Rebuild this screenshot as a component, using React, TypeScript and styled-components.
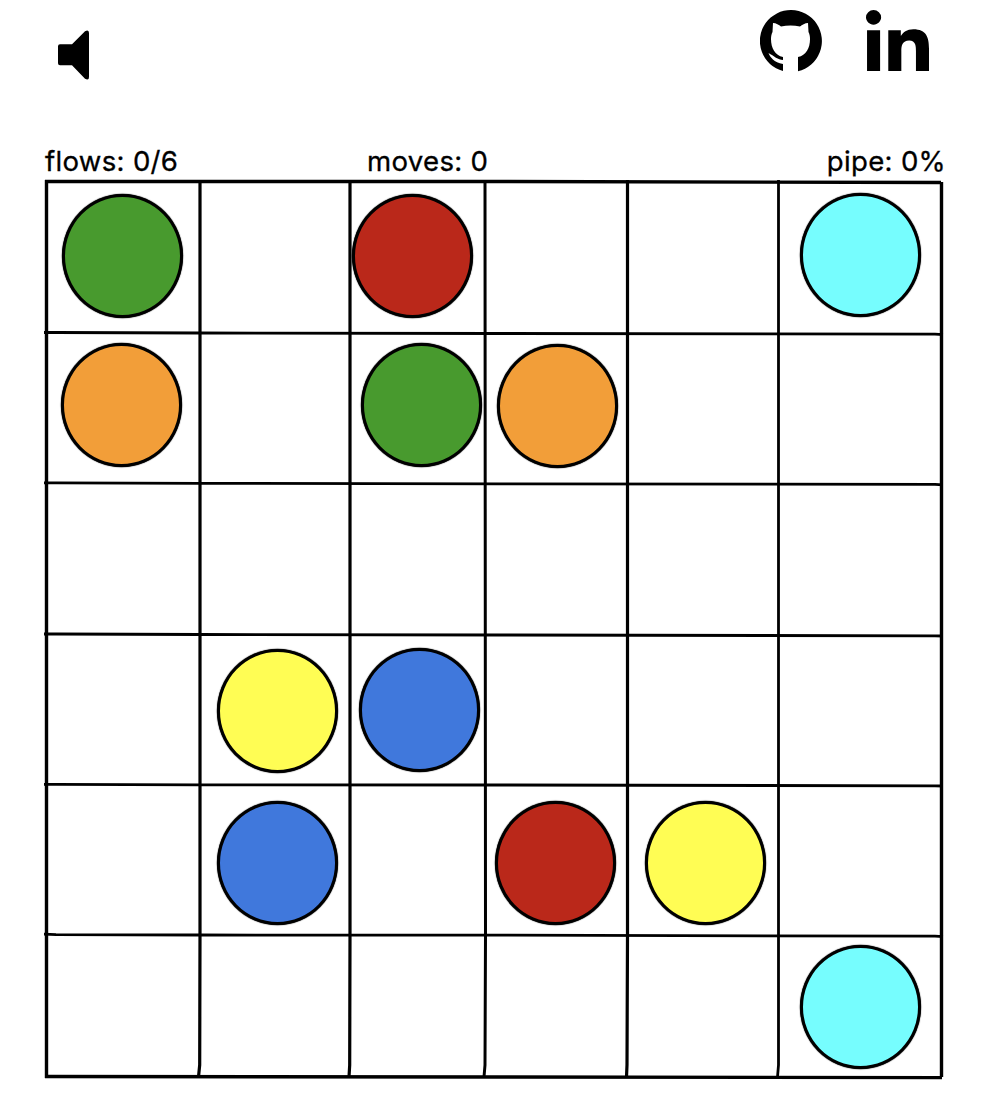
import React from "react";
import styled, { createGlobalStyle } from "styled-components";

const GlobalStyle = createGlobalStyle`
  html, body {
    margin: 0;
    padding: 0;
    background: #fff;
    color: #000;
    font-family: "Inter", "Lato", sans-serif;
  }
`;

const Page = styled.div`
  width: 1004px;
  height: 1114px;
  overflow: hidden;
`;

const TopBar = styled.header`
  display: flex;
  justify-content: space-between;
  align-items: flex-start;
  height: 135px;
  padding: 10px 75px 0 58px;
`;

const SoundButton = styled.button`
  display: block;
  margin: 20px 0 0;
  padding: 0;
  border: none;
  background: none;
  line-height: 0;
`;

const Socials = styled.nav`
  display: flex;
  align-items: flex-start;
  gap: 44px;
`;

const SocialLink = styled.a`
  display: block;
  color: #000;
  line-height: 0;
`;

const Stats = styled.div`
  display: grid;
  grid-template-columns: 322px 1fr auto;
  align-items: end;
  box-sizing: border-box;
  width: 901px;
  height: 36px;
  margin-left: 45px;
  padding-bottom: 5px;
`;

const Stat = styled.span`
  font-size: 27.6px;
  font-weight: 400;
  line-height: 32px;
  letter-spacing: 0.3px;
  -webkit-text-stroke: 0.3px #000;
  white-space: nowrap;
`;

const Board = styled.main`
  position: relative;
  display: grid;
  grid-template-columns: 154px 150px 135px 143px 151px 163px;
  grid-template-rows: 152px 150px 151px 150px 150px 142px;
  width: 896px;
  margin-left: 46px;
`;

const BoardLines = styled.svg`
  position: absolute;
  left: -4px;
  top: -4px;
  pointer-events: none;
`;

const Cell = styled.div`
  position: relative;
  min-width: 0;
`;

const Dot = styled.div<{ $color: string; $x: number; $y: number }>`
  box-sizing: border-box;
  width: 121px;
  height: 124px;
  margin: ${(p) => p.$y}px 0 0 ${(p) => p.$x}px;
  border: 3px solid #000;
  border-radius: 50%;
  background: ${(p) => p.$color};
  box-shadow: 0 0 1px 0.2px #000;
`;

const GREEN = "#489a2e";
const RED = "#ba281a";
const CYAN = "#76fdfe";
const ORANGE = "#f29e39";
const YELLOW = "#fffd54";
const BLUE = "#4078dc";

// hand placed, the dots are not centered in their cells
const dots = [
  { row: 0, col: 0, color: GREEN, x: 16, y: 13 },
  { row: 0, col: 2, color: RED, x: 2, y: 13 },
  { row: 0, col: 5, color: CYAN, x: 21, y: 12 },
  { row: 1, col: 0, color: ORANGE, x: 15, y: 10 },
  { row: 1, col: 2, color: GREEN, x: 11, y: 10 },
  { row: 1, col: 3, color: ORANGE, x: 12, y: 11 },
  { row: 3, col: 1, color: YELLOW, x: 17, y: 15 },
  { row: 3, col: 2, color: BLUE, x: 9, y: 14 },
  { row: 4, col: 1, color: BLUE, x: 17, y: 17 },
  { row: 4, col: 3, color: RED, x: 10, y: 17 },
  { row: 4, col: 4, color: YELLOW, x: 17, y: 17 },
  { row: 5, col: 5, color: CYAN, x: 21, y: 11 },
];

// sketched lines, in page coordinates
const lines = [
  { d: "M46.5 180 V1078", w: 3.4 },
  { d: "M200 181 V935 L199.7 1065 L198.5 1077", w: 3.2 },
  { d: "M350 181 V935 L349.7 1065 L349 1077", w: 3.2 },
  { d: "M485 181 L485.5 935 L485 1065 L484 1077", w: 3 },
  { d: "M627.5 180 L627.5 935 L627 1065 L626.5 1077", w: 3.2 },
  { d: "M778.5 180 L778.5 935 L778.5 1065 L777.5 1077", w: 2.8 },
  { d: "M941.5 182 V1077", w: 3.4 },
  { d: "M45 181.5 H500 L941 182.5", w: 3.4 },
  { d: "M44 332.5 L56 332.5 L200 333 L500 333.5 L935 334.2 L943 334.6", w: 2.8 },
  { d: "M44 482.8 L56 482.8 L200 483.3 L500 483.8 L935 484.4 L943 484.8", w: 2.8 },
  { d: "M44 634 L56 634 L200 634.5 L500 635 L935 635.8 L943 636", w: 2.8 },
  { d: "M44 784.4 L56 784.4 L200 784.8 L500 785 L935 785.8 L943 786", w: 2.8 },
  { d: "M44 934.2 L56 934.6 L200 935 L500 935.2 L935 936.2 L943 936.6", w: 2.8 },
  { d: "M45 1076.5 L500 1077 L942 1077.6", w: 3.4 },
];

const GITHUB_MARK =
  "M23 61A31 31 0 1 1 38 61.2V47C46 45.5 50 38 50 29C50 26 49.5 24 48.5 22L48 13C45 13 42 15 40 16.5C34 15 27 15 21 16.5C19 15 16 13 13 13L12.5 22C11.5 24 11 26 11 29C11 38 15 45.5 23 47V50C18 50 14 46 8.5 43C10 47 14 52.5 23 54Z";

const LINKEDIN_IN =
  "M100.28 448H7.4V148.9h92.88zM53.79 108.1C24.09 108.1 0 83.5 0 53.8a53.79 53.79 0 0 1 107.58 0c0 29.7-24.1 54.3-53.79 54.3zM447.9 448h-92.68V302.4c0-34.7-.7-79.2-48.29-79.2-48.29 0-55.69 37.7-55.69 76.7V448h-92.78V148.9h89.08v40.8h1.3c12.4-23.5 42.69-48.3 87.88-48.3 94 0 111.28 61.9 111.28 142.3V448z";

const App = () => {
  const rows = [0, 1, 2, 3, 4, 5];
  const cols = [0, 1, 2, 3, 4, 5];

  return (
    <Page>
      <GlobalStyle />
      <TopBar>
        <SoundButton aria-label="sound">
          <svg width="31" height="50" viewBox="0 0 31 50">
            <path d="M2 14.3H14L27 1.2Q31 -1 31 3V47Q31 51 27 48.8L14 35.3H2Q0 35.3 0 33.3V16.3Q0 14.3 2 14.3Z" />
          </svg>
        </SoundButton>
        <Socials>
          <SocialLink aria-label="github">
            <svg width="62" height="62" viewBox="0 0 62 62" fill="currentColor">
              <path d={GITHUB_MARK} />
            </svg>
          </SocialLink>
          <SocialLink aria-label="linkedin">
            <svg width="63" height="61" viewBox="0 0 448 448" fill="currentColor" preserveAspectRatio="none">
              <path d={LINKEDIN_IN} />
            </svg>
          </SocialLink>
        </Socials>
      </TopBar>

      <Stats>
        <Stat>flows: 0/6</Stat>
        <Stat>moves: 0</Stat>
        <Stat>pipe: 0%</Stat>
      </Stats>

      <Board>
        {rows.map((row) =>
          cols.map((col) => {
            const dot = dots.find((d) => d.row === row && d.col === col);
            return (
              <Cell key={row + "-" + col}>
                {dot && <Dot $color={dot.color} $x={dot.x} $y={dot.y} />}
              </Cell>
            );
          })
        )}
        <BoardLines width="904" height="904" viewBox="42 177 904 904" fill="none" stroke="#000">
          {lines.map((line) => (
            <path key={line.d} d={line.d} strokeWidth={line.w} />
          ))}
        </BoardLines>
      </Board>
    </Page>
  );
};

export default App;
